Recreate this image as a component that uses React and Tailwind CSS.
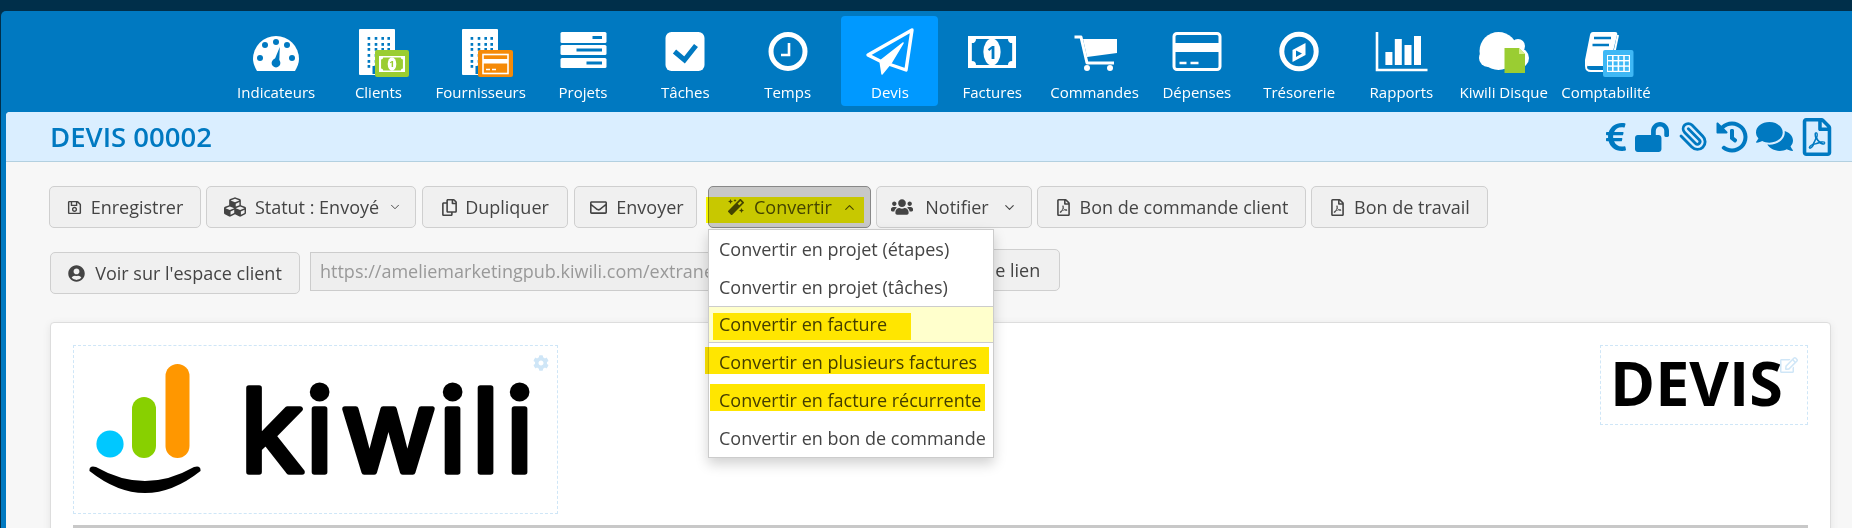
import React from 'react';
import { ChevronDown, ChevronUp, Paperclip } from 'lucide-react';
import {
  FaCog,
  FaComments,
  FaCubes,
  FaEuroSign,
  FaHistory,
  FaLockOpen,
  FaMagic,
  FaRegCopy,
  FaRegEdit,
  FaRegEnvelope,
  FaRegFilePdf,
  FaRegSave,
  FaUserCircle,
  FaUsers,
} from 'react-icons/fa';

const BLUE = '#0079c1';

function Building() {
  const rows = [11, 17, 22, 28, 34, 39];
  const cols = [21.6, 28.7, 35.4, 41.4];
  return (
    <g>
      <rect x="13" y="3" width="36" height="46" rx="1" fill="#fff" />
      {rows.map((y) =>
        cols.map((x) => <rect key={`${x}-${y}`} x={x} y={y} width="2.6" height="2.8" fill={BLUE} />)
      )}
      <rect x="26.5" y="40" width="5" height="8" fill={BLUE} />
    </g>
  );
}

function Bill({ x, y, w, h, fg, bg }) {
  const cx = x + w / 2;
  const cy = y + h / 2;
  const a = w * 0.08;
  const b = h * 0.09;
  const n = h * 0.13;
  return (
    <g>
      <rect x={x} y={y} width={w} height={h} fill={fg} />
      <path
        d={`M${x + a + n} ${y + b} H${x + w - a - n} Q${x + w - a - n} ${y + b + n} ${x + w - a} ${y + b + n} V${y + h - b - n} Q${x + w - a - n} ${y + h - b - n} ${x + w - a - n} ${y + h - b} H${x + a + n} Q${x + a + n} ${y + h - b - n} ${x + a} ${y + h - b - n} V${y + b + n} Q${x + a + n} ${y + b + n} ${x + a + n} ${y + b} Z`}
        fill={bg}
      />
      <ellipse cx={cx} cy={cy} rx={h * 0.27} ry={h * 0.42} fill={fg} />
      <text x={cx} y={cy + h * 0.21} textAnchor="middle" fill={bg} fontSize={h * 0.58} fontWeight="700" fontFamily="'Open Sans', sans-serif">
        1
      </text>
    </g>
  );
}

const navIcons = {
  gauge: (
    <>
      <path d="M13 45 Q9 38 9 33 A23 23 0 0 1 55 33 Q55 38 51 45 Z" fill="#fff" />
      {[[32, 16], [21, 19], [16, 32], [43, 19], [48, 32]].map(([x, y]) => (
        <circle key={x} cx={x} cy={y} r="3" fill={BLUE} />
      ))}
      <path d="M35.8 21 L35.2 37 H29.2 Z" fill={BLUE} />
      <circle cx="32" cy="37" r="4.4" fill={BLUE} />
    </>
  ),
  clients: (
    <>
      <Building />
      <rect x="29" y="24" width="34" height="27" rx="2" fill="#9acd32" />
      <Bill x={33} y={30} w={26} h={16} fg="#fff" bg="#9acd32" />
    </>
  ),
  suppliers: (
    <>
      <Building />
      <rect x="29" y="24" width="35" height="27" rx="2" fill="#f58a07" />
      <rect x="34" y="28.5" width="25" height="19" fill="#f58a07" stroke="#fff" strokeWidth="1.6" />
      <rect x="34" y="33" width="25" height="4.5" fill="#fff" />
      <path d="M37 43.5 h4 M43 43.5 h4" stroke="#fff" strokeWidth="1.6" />
    </>
  ),
  projects: (
    <>
      <rect x="9.5" y="6" width="46" height="11" rx="1.5" fill="#fff" />
      <rect x="9.5" y="19" width="46" height="10" rx="1.5" fill="#fff" />
      <rect x="9.5" y="32" width="46" height="10" rx="1.5" fill="#fff" />
      <rect x="41.5" y="10" width="9.5" height="3" fill={BLUE} />
      <rect x="25.5" y="22.5" width="25.5" height="3" fill={BLUE} />
      <rect x="35.5" y="35.5" width="15.5" height="3" fill={BLUE} />
    </>
  ),
  tasks: (
    <>
      <rect x="12.5" y="6" width="39" height="39" rx="6" fill="#fff" />
      <path d="M21.5 25.5 L31.5 34 L43 19.5" fill="none" stroke={BLUE} strokeWidth="5" />
    </>
  ),
  time: (
    <>
      <circle cx="32" cy="25.5" r="17" fill="none" stroke="#fff" strokeWidth="5" />
      <path d="M33 17 V29 H25" fill="none" stroke="#fff" strokeWidth="2.6" />
    </>
  ),
  quote: (
    <>
      <path d="M54 4 L10 29 L22 35 L48 44 Z" fill="none" stroke="#fff" strokeWidth="3.4" strokeLinejoin="round" />
      <path d="M45 17 L22 35 L24 48 L33 37 Z" fill="#fff" stroke="#fff" strokeWidth="1.5" strokeLinejoin="round" />
    </>
  ),
  bill: <Bill x={8} y={10} w={48} h={32} fg="#fff" bg={BLUE} />,
  cart: (
    <>
      <path d="M11.5 11 H18 L24 37 H51" fill="none" stroke="#fff" strokeWidth="3" strokeLinejoin="round" />
      <path d="M20 13 H54 V27 L24 31 Z" fill="#fff" />
      <circle cx="24" cy="42" r="3" fill="#fff" />
      <circle cx="47" cy="42" r="3" fill="#fff" />
    </>
  ),
  card: (
    <>
      <rect x="9" y="7.5" width="46" height="36" rx="3" fill="none" stroke="#fff" strokeWidth="3" />
      <rect x="9" y="17" width="46" height="9" fill="#fff" />
      <path d="M14.5 37 h7 M25.5 37 h8" stroke="#fff" strokeWidth="2.6" />
    </>
  ),
  treasury: (
    <>
      <circle cx="32" cy="25.5" r="17.2" fill="none" stroke="#fff" strokeWidth="5" />
      <path d="M38.5 17 V29 L25.5 36 V24 Z" fill="#fff" />
      <path d="M29 24.5 L35 27.5 L29 31 Z" fill={BLUE} />
    </>
  ),
  reports: (
    <>
      <path d="M8 6 V44 H58.5" fill="none" stroke="#fff" strokeWidth="2.6" />
      <rect x="16.4" y="26" width="7" height="13" fill="#fff" />
      <rect x="25.8" y="13" width="7" height="26" fill="#fff" />
      <rect x="35.5" y="19" width="7" height="20" fill="#fff" />
      <rect x="45" y="10" width="7" height="29" fill="#fff" />
    </>
  ),
  drive: (
    <>
      <circle cx="26.5" cy="25" r="19" fill="#fff" />
      <circle cx="46" cy="20" r="7" fill="#fff" />
      <circle cx="47" cy="32" r="10" fill="#fff" />
      <circle cx="16" cy="32" r="9" fill="#fff" />
      <path d="M32.5 22 H47 L53 28 V47 H32.5 Z" fill="#9acd32" />
      <path d="M47 22 V28 H53 Z" fill="#d9f08f" />
    </>
  ),
  accounting: (
    <>
      <path d="M19 6 H41 Q44 6 43 9 L36 38 H18 Q14 38 13 41 Q13 44 17 44 H36 V46 H17 Q11 46 11 40 L11 34 L16 9 Q16.5 6 19 6 Z" fill="#fff" />
      <path d="M20 12 H37 M18.5 19 H35" stroke={BLUE} strokeWidth="2.4" />
      <path d="M44 9 L38 38" stroke="#fff" strokeWidth="2" />
      <path d="M12 36 L34 36 L33 40 L14 40 Z" fill="#fff" />
      <rect x="29" y="24" width="30.5" height="27" rx="2" fill="#3fb8f5" />
      <rect x="33" y="29" width="23" height="17" fill="#fff" />
      {[0, 1, 2, 3].map((c) =>
        [0, 1, 2].map((r) => (
          <rect key={`${c}-${r}`} x={34 + c * 5.6} y={30 + r * 5.4} width="4" height="4" fill="#3fb8f5" />
        ))
      )}
    </>
  ),
};

const navItems = [
  ['Indicateurs', 'gauge'],
  ['Clients', 'clients'],
  ['Fournisseurs', 'suppliers'],
  ['Projets', 'projects'],
  ['Tâches', 'tasks'],
  ['Temps', 'time'],
  ['Devis', 'quote'],
  ['Factures', 'bill'],
  ['Commandes', 'cart'],
  ['Dépenses', 'card'],
  ['Trésorerie', 'treasury'],
  ['Rapports', 'reports'],
  ['Kiwili Disque', 'drive'],
  ['Comptabilité', 'accounting'],
];

function NavItem({ label, icon }) {
  const active = label === 'Devis';
  return (
    <div className="w-[102.3px] flex-none px-[2.6px]">
      <div className={`h-[90px] rounded-[4px] pt-[10px] flex flex-col items-center ${active ? 'bg-[#0099ff]' : ''}`}>
        <svg width="64" height="54" viewBox="0 0 64 54">
          {navIcons[icon]}
        </svg>
        <span className="mt-[2px] text-[15px] leading-[20px] text-white whitespace-nowrap">{label}</span>
      </div>
    </div>
  );
}

function Button({ className = '', active, children }) {
  return (
    <div
      className={`h-[42px] flex-none flex items-center justify-center rounded-[5px] border text-[18px] text-[#444] whitespace-nowrap ${
        active ? 'border-[#888] bg-[#c8c8c8]' : 'border-[#cfcfcf] bg-[#f0f0f0]'
      } ${className}`}
    >
      {children}
    </div>
  );
}

function MenuItem({ children, hl, className = 'h-[38px]' }) {
  return (
    <div className={`relative pl-[10px] flex items-center text-[18px] text-[#444] whitespace-nowrap ${className}`}>
      {children}
      {hl}
    </div>
  );
}

function KiwiliLogo() {
  return (
    <svg width="484" height="167" viewBox="0 0 484 167">
      <circle cx="36" cy="98" r="13.6" fill="#00c8ff" />
      <rect x="58" y="51" width="24" height="61" rx="12" fill="#88d000" />
      <rect x="91.5" y="18" width="24" height="94" rx="12" fill="#ff9700" />
      <path d="M15.5 125 Q15 119 22 121 Q71 149 120 121 Q127 119 126.5 125 Q71 169 15.5 125 Z" fill="#000" />
      <text
        x="166 231.5 267 364.5 397.5 431.5"
        y="126"
        fontFamily="Inter, sans-serif"
        fontSize="116"
        fontWeight="400"
        fill="#000"
        stroke="#000"
        strokeWidth="5.5"
        strokeLinejoin="round"
      >
        kiwili
      </text>
    </svg>
  );
}

export default function App() {
  return (
    <div className="h-[528px] w-full overflow-hidden bg-[#002f4a] pt-[11px] font-['Open_Sans',sans-serif]">
      <div className="ml-px h-[517px] rounded-tl-[5px] bg-[#0079c1] flex flex-col">
        <div className="flex h-[101px] flex-none pl-[224px] pt-[5px]">
          {navItems.map(([label, icon]) => (
            <NavItem key={label} label={label} icon={icon} />
          ))}
        </div>

        <div className="ml-[5px] flex-1 rounded-tl-[4px] bg-[#f7f7f7]">
          <div className="flex h-[50px] items-center justify-between rounded-tl-[4px] border-b border-[#b3d0e0] bg-[#daeeff] pl-[44px] pr-[16px]">
            <h1 className="text-[27.5px] font-semibold text-[#0079c1]">DEVIS 00002</h1>
            <div className="flex items-center text-[#0079c1]">
              <FaEuroSign className="size-[32px]" />
              <FaLockOpen className="ml-[3px] size-[34px]" />
              <Paperclip className="ml-[9px] size-[31px] -scale-x-100" strokeWidth={2.2} />
              <FaHistory className="ml-[7px] size-[32px]" />
              <FaComments className="ml-[8px] size-[37px]" />
              <FaRegFilePdf className="ml-[5px] size-[38px]" />
            </div>
          </div>

          <div className="ml-[43px] mt-[24px] flex h-[42px]">
            <Button className="w-[152px] gap-[9px]">
              <FaRegSave className="text-[15px]" />
              Enregistrer
            </Button>
            <Button className="ml-[5px] w-[210px] gap-[9px] pl-[4px]">
              <FaCubes className="text-[22px]" />
              Statut : Envoyé
              <ChevronDown className="size-[14px]" strokeWidth={1.6} />
            </Button>
            <Button className="ml-[6px] w-[146px] gap-[7px]">
              <FaRegCopy className="text-[17px]" />
              Dupliquer
            </Button>
            <Button className="ml-[6px] w-[123px] gap-[9px] pl-[3px]">
              <FaRegEnvelope className="text-[17px]" />
              Envoyer
            </Button>
            <div className="relative ml-[11px] w-[163px] flex-none">
              <Button active className="w-full gap-[10px] pl-[6px]">
                <FaMagic className="text-[16px]" />
                Convertir
                <ChevronUp className="size-[15px]" strokeWidth={1.8} />
              </Button>
              <div className="absolute left-[-2px] top-[11px] h-[26px] w-[158px] bg-[#ffff00] mix-blend-multiply" />
              <div className="absolute left-0 top-[43px] z-10 w-[286px] border border-[#ccc] bg-white shadow-[0_6px_12px_rgba(0,0,0,0.18)]">
                <MenuItem>Convertir en projet (étapes)</MenuItem>
                <MenuItem>Convertir en projet (tâches)</MenuItem>
                <div className="border-y border-[#ccc]">
                  <MenuItem
                    className="h-[35px] bg-[#ffffcc]"
                    hl={<div className="absolute left-[4px] top-[6px] h-[27px] w-[198px] bg-[#ffe600] mix-blend-multiply" />}
                  >
                    Convertir en facture
                  </MenuItem>
                </div>
                <MenuItem hl={<div className="absolute left-[-4px] top-[4px] h-[27px] w-[284px] bg-[#ffe600] mix-blend-multiply" />}>
                  Convertir en plusieurs factures
                </MenuItem>
                <MenuItem hl={<div className="absolute left-[1px] top-[3px] h-[27px] w-[275px] bg-[#ffe600] mix-blend-multiply" />}>
                  Convertir en facture récurrente
                </MenuItem>
                <MenuItem>Convertir en bon de commande</MenuItem>
              </div>
            </div>
            <Button className="ml-[5px] w-[156px] gap-[12px]">
              <FaUsers className="text-[22px]" />
              Notifier
              <ChevronDown className="ml-[1px] size-[15px]" strokeWidth={1.8} />
            </Button>
            <Button className="ml-[5px] w-[269px] gap-[8px]">
              <FaRegFilePdf className="text-[17px]" />
              Bon de commande client
            </Button>
            <Button className="ml-[5px] w-[177px] gap-[8px]">
              <FaRegFilePdf className="text-[17px]" />
              Bon de travail
            </Button>
          </div>

          <div className="ml-[44px] mt-[21px] flex h-[45px]">
            <Button className="mt-[3px] w-[250px] gap-[10px]">
              <FaUserCircle className="text-[17px]" />
              Voir sur l'espace client
            </Button>
            <div className="ml-[10px] mt-[3px] flex h-[39px] w-[605px] flex-none items-center overflow-hidden border border-[#ccc] bg-[#eee] pl-[9px] text-[18px] text-[#999] whitespace-nowrap">
              https://ameliemarketingpub.kiwili.com/extrane
            </div>
            <Button className="w-[145px] pr-[4px]">Copier le lien</Button>
          </div>

          <div className="ml-[44px] mt-[28px] w-[1781px] h-[300px] rounded-[4px] border border-[#ddd] bg-white px-[22px] pt-[22px] shadow-[0_2px_8px_rgba(0,0,0,0.08)]">
            <div className="flex justify-between">
              <div className="relative h-[169px] w-[485px] border border-dashed border-[#cfe6f7]">
                <KiwiliLogo />
                <FaCog className="absolute right-[8px] top-[9px] text-[16px] text-[#cfe6f7]" />
              </div>
              <div className="relative flex h-[80px] w-[208px] items-start border border-dashed border-[#cfe6f7] pl-[9px]">
                <span className="text-[61px] leading-[74px] font-bold text-black">DEVIS</span>
                <FaRegEdit className="absolute right-[9px] top-[10px] text-[18px] text-[#cfe6f7]" />
              </div>
            </div>
            <div className="mt-[11px] h-[4px] bg-[#c8c8c8]" />
          </div>
        </div>
      </div>
    </div>
  );
}
